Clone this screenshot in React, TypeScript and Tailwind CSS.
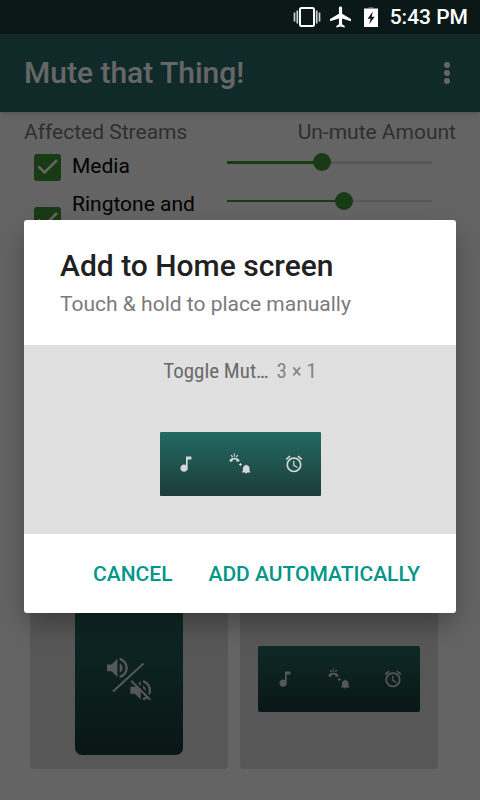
import React from "react";

interface Stream {
    id: string;
    label: string;
    volume: number;
    rowClass: string;
    trackClass: string;
}

const STREAMS: Stream[] = [
    { id: "media", label: "Media", volume: 46, rowClass: "min-h-[27px]", trackClass: "[&::-webkit-slider-runnable-track]:h-[3px]" },
    { id: "ringtone", label: "Ringtone and", volume: 58, rowClass: "min-h-14", trackClass: "[&::-webkit-slider-runnable-track]:h-[2px]" },
];

const MusicIcon = () => (
    <svg viewBox="0 0 24 24" className="size-5" fill="currentColor" aria-hidden="true">
        <path d="M12 3v10.300c-.7-.4-1.500-.6-2.300-.6-2.500 0-4.400 1.900-4.400 4.300s1.900 4.300 4.400 4.300 4.300-1.900 4.300-4.300V6.500h4.500V3h-6.500z" />
    </svg>
);

const RingerIcon = () => (
    <svg viewBox="0 0 22 22" className="size-[22px]" fill="currentColor" aria-hidden="true">
        <path d="M1.600 2.600l1-.9 1.500 2-1 .7zM4.800.4h1.100v3.400H4.800zM8.200 1.700l1 .9-1.500 1.800-1-.7z" />
        <path d="M.2 7.300C1.600 5.600 3.400 4.800 5.400 4.800s3.900.8 5.300 2.500L9.300 9.100 7.300 8.200V6.900C6.100 6.500 4.800 6.500 3.600 6.900v1.300L1.600 9.100z" />
        <path d="M10.900 9.900h1v1h1v1h-1v1h-1v-1h-1v-1h1z" />
        <path d="M16.600 11.700h1.200v.6c1.700.4 2.700 1.500 2.700 3.200v2.300l.8.900v.8h-8.200v-.8l.8-.9v-2.300c0-1.700 1-2.800 2.700-3.200zM16.200 19.500h2c0 .6-.4 1-1 1s-1-.4-1-1z" />
    </svg>
);

const AlarmIcon = () => (
    <svg viewBox="0 0 24 24" className="size-5" fill="currentColor" aria-hidden="true">
        <path d="M22 5.720l-4.600-3.860-1.290 1.530 4.600 3.860L22 5.720zM7.880 3.390L6.600 1.860 2 5.710l1.290 1.530 4.590-3.850zM12.500 8H11v6l4.750 2.850.75-1.230-4-2.370V8zM12 4c-4.970 0-9 4.030-9 9s4.020 9 9 9c4.970 0 9-4.030 9-9s-4.030-9-9-9zm0 16c-3.870 0-7-3.130-7-7s3.130-7 7-7 7 3.130 7 7-3.130 7-7 7z" />
    </svg>
);

const MuteToggleIcon = () => (
    <svg viewBox="0 0 46 42" className="h-[42px] w-[46px]" fill="currentColor" aria-hidden="true">
        <path
            transform="translate(-2.4 -3.9) scale(1.15)"
            d="M3 9v6h4l5 5V4L7 9H3zm13.500 3c0-1.770-1.020-3.290-2.500-4.030v8.050c1.480-.73 2.500-2.250 2.500-4.020zM14 3.230v2.060c2.890.86 5 3.540 5 6.710s-2.110 5.850-5 6.710v2.060c4.010-.91 7-4.490 7-8.770s-2.990-7.860-7-8.770z"
        />
        <path d="M7 33.500L37.500 5.500" stroke="currentColor" strokeWidth="2" />
        <path
            transform="translate(20.900 18.500) scale(1.150)"
            d="M16.500 12c0-1.770-1.020-3.290-2.500-4.030v2.210l2.450 2.450c.03-.2.050-.41.050-.63zm2.500 0c0 .94-.2 1.820-.54 2.640l1.510 1.510C20.630 14.910 21 13.500 21 12c0-4.280-2.990-7.860-7-8.770v2.060c2.890.86 5 3.540 5 6.710zM4.270 3L3 4.270 7.730 9H3v6h4l5 5v-6.730l4.250 4.250c-.67.52-1.420.93-2.250 1.180v2.060c1.380-.31 2.630-.95 3.690-1.810L19.730 21 21 19.730l-9-9L4.270 3zM12 4L9.910 6.090 12 8.180V4z"
        />
    </svg>
);

const StatusBar = () => (
    <div className="relative z-20 flex h-[34px] items-center justify-end bg-[#0a1917] pr-3 text-white">
        <svg viewBox="0 0 28 22" className="mr-2 h-[22px] w-7" aria-hidden="true">
            <rect x="7" y="2" width="14" height="18" rx="1.500" fill="none" stroke="currentColor" strokeWidth="2" />
            <path d="M1.500 6.500v9M4.300 4.500v13M23.700 4.500v13M26.500 6.500v9" stroke="currentColor" strokeWidth="1.700" opacity=".8" />
        </svg>
        <svg viewBox="2 1.500 20 21" className="mr-3 h-[22px] w-[23px]" fill="currentColor" aria-hidden="true">
            <path d="M22 16v-2l-8.500-5V3.500c0-.83-.67-1.500-1.500-1.500s-1.500.67-1.500 1.500V9L2 14v2l8.500-2.500V19L8 20.500V22l4-1 4 1v-1.500L13.500 19v-5.500L22 16z" />
        </svg>
        <svg viewBox="0 0 14 20" className="mr-3 h-5 w-3.5" aria-hidden="true">
            <path d="M4.500 0h5v1.500h-5z" fill="currentColor" opacity=".3" />
            <path d="M0 1.500h14V20H0z" fill="currentColor" />
            <path d="M8.800 4.500L3.600 11.800h3L5.200 17.300l5.400-7.500H7.700z" fill="#0a1917" />
        </svg>
        <span className="text-[21px] leading-6 font-medium">5:43 PM</span>
    </div>
);

const AppBar = () => (
    <header className="relative flex h-[78px] items-center justify-between bg-[#286866] pr-6 pl-6 text-white shadow-md">
        <h1 className="text-[30px] leading-8 font-medium">Mute that Thing!</h1>
        <button type="button" aria-label="More options" className="flex w-[18px] flex-col items-center gap-[2px]">
            <span className="size-[6px] rounded-full bg-white" />
            <span className="size-[6px] rounded-full bg-white" />
            <span className="size-[6px] rounded-full bg-white" />
        </button>
    </header>
);

const StreamSettings = () => (
    <section className="pt-2">
        <div className="flex justify-between px-6 text-[21px] leading-6 text-[#757575]">
            <h2>Affected Streams</h2>
            <h2>Un-mute Amount</h2>
        </div>
        <div className="flex pr-12 pl-6">
            <div className="flex w-[203px] shrink-0 flex-col gap-[11px] pt-[10px] pl-[10px]">
                {STREAMS.map((stream) => (
                    <div key={stream.id} className={`flex items-center ${stream.rowClass}`}>
                        <span className="mr-[11px] grid size-[27px] shrink-0">
                            <input
                                id={stream.id}
                                type="checkbox"
                                defaultChecked
                                className="peer col-start-1 row-start-1 size-[27px] appearance-none rounded-[3px] border-2 border-[#3c9132] checked:bg-[#3c9132]"
                            />
                            <svg
                                viewBox="0 0 27 27"
                                className="pointer-events-none invisible col-start-1 row-start-1 size-[27px] peer-checked:visible"
                                aria-hidden="true"
                            >
                                <path d="M4.500 12.500l6 6L23 6" fill="none" stroke="#fafafa" strokeWidth="2.500" />
                            </svg>
                        </span>
                        <label htmlFor={stream.id} className="self-start text-[21px] leading-6 text-black">
                            {stream.label}
                        </label>
                    </div>
                ))}
            </div>
            <div className="flex flex-1 flex-col gap-[21px] pt-[9px]">
                {STREAMS.map((stream) => (
                    <input
                        key={stream.id}
                        type="range"
                        aria-label={`${stream.label} un-mute amount`}
                        defaultValue={stream.volume}
                        style={{ "--volume": `${stream.volume}%` } as React.CSSProperties}
                        className={`h-[18px] w-full appearance-none bg-transparent [&::-webkit-slider-runnable-track]:bg-[linear-gradient(to_right,#3c9132_var(--volume),#dadada_var(--volume))] [&::-webkit-slider-thumb]:-mt-2 [&::-webkit-slider-thumb]:size-[18px] [&::-webkit-slider-thumb]:appearance-none [&::-webkit-slider-thumb]:rounded-full [&::-webkit-slider-thumb]:bg-[#3c9132] ${stream.trackClass}`}
                    />
                ))}
            </div>
        </div>
    </section>
);

const StreamIcons = () => (
    <>
        <MusicIcon />
        <RingerIcon />
        <AlarmIcon />
    </>
);

const WidgetCards = () => (
    <section className="mt-auto flex gap-3 pr-[42px] pb-[31px] pl-[30px]">
        <div className="flex h-[180px] flex-1 items-center justify-center rounded-[4px] bg-[#dadada]">
            <div className="flex h-[152px] w-[108px] items-center justify-center rounded-[7px] bg-linear-to-b from-[#256962] to-[#173a36] text-[#dadada]">
                <MuteToggleIcon />
            </div>
        </div>
        <div className="flex h-[180px] flex-1 items-center justify-center rounded-[4px] bg-[#dadada]">
            <div className="grid h-[66px] w-[162px] grid-cols-3 place-items-center rounded-[2px] bg-linear-to-b from-[#256962] to-[#173a36] text-[#dadada]">
                <StreamIcons />
            </div>
        </div>
    </section>
);

const AddWidgetDialog = () => (
    <div className="absolute inset-0 z-10 flex items-center bg-black/60 px-6 pt-[33px]">
        <div
            role="dialog"
            aria-labelledby="dialog-title"
            className="w-full overflow-hidden rounded-[3px] bg-white shadow-[0_12px_24px_rgba(0,0,0,0.28)]"
        >
            <div className="px-9 pt-[30px] pb-[29px]">
                <h2 id="dialog-title" className="text-[30px] leading-8 font-medium text-[#212121]">
                    Add to Home screen
                </h2>
                <p className="mt-[10px] text-[21px] leading-6 text-[#7b7b7b]">Touch &amp; hold to place manually</p>
            </div>
            <div className="flex flex-col items-center bg-[#e0e0e0] pt-[14px] pb-[38px]">
                <p className="flex gap-2 font-['Roboto_Condensed','Liberation_Sans_Narrow',Roboto,sans-serif] text-[21px] leading-6">
                    <span className="text-[#6a6a6a]">Toggle Mut…</span>
                    <span className="text-[#858585]">3 × 1</span>
                </p>
                <div className="mt-[49px] grid h-16 w-[161px] grid-cols-3 place-items-center rounded-[1px] bg-linear-to-b from-[#226a62] to-[#1b3c3a] text-[#d6d6d6]">
                    <StreamIcons />
                </div>
            </div>
            <div className="flex h-[79px] items-center justify-end gap-9 px-9 text-[21px] leading-6 font-medium text-[#009688]">
                <button type="button">CANCEL</button>
                <button type="button">ADD AUTOMATICALLY</button>
            </div>
        </div>
    </div>
);

const App: React.FC = () => {
    return (
        <div className="relative flex min-h-screen flex-col bg-[#fafafa] font-[Roboto,sans-serif]">
            <StatusBar />
            <AppBar />
            <StreamSettings />
            <WidgetCards />
            <AddWidgetDialog />
        </div>
    );
};

export default App;
